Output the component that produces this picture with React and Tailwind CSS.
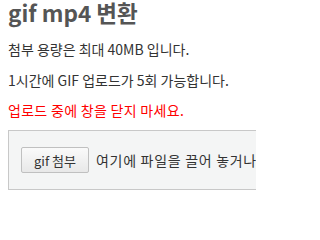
import React from 'react';

function App() {
  return (
    <div
      className="w-[256px] h-[206px] overflow-hidden bg-white pl-2 text-[#333]"
      style={{ fontFamily: '"Noto Sans CJK KR", "Noto Sans", sans-serif' }}
    >
      {/* Title */}
      <h1 className="text-[22.5px] font-bold leading-[25px] text-[#555]">gif mp4 변환</h1>

      <p className="text-[14px] leading-[20px] mt-[14px]">첨부 용량은 최대 40MB 입니다.</p>
      <p className="text-[14px] leading-[20px] mt-[11px]">1시간에 GIF 업로드가 5회 가능합니다.</p>
      <p className="text-[14px] leading-[20px] mt-[10px] text-[#ff0000] tracking-[0.3px]">업로드 중에 창을 닫지 마세요.</p>

      {/* Drop zone */}
      <div className="mt-[10px] h-[60px] w-[400px] border border-[#c8c8c8] bg-[#f4f5f5] flex items-center pl-3">
        <button className="h-[26px] w-[68px] rounded-[2px] border border-[#c0c0c0] bg-gradient-to-b from-[#fafafa] to-[#e8e8e8] text-[13px] text-[#333] leading-none">
          gif 첨부
        </button>
        <span className="ml-[7px] text-[14px] tracking-[0.7px] whitespace-nowrap">여기에 파일을 끌어 놓거나 클릭하세요</span>
      </div>
    </div>
  );
}

export default App;
